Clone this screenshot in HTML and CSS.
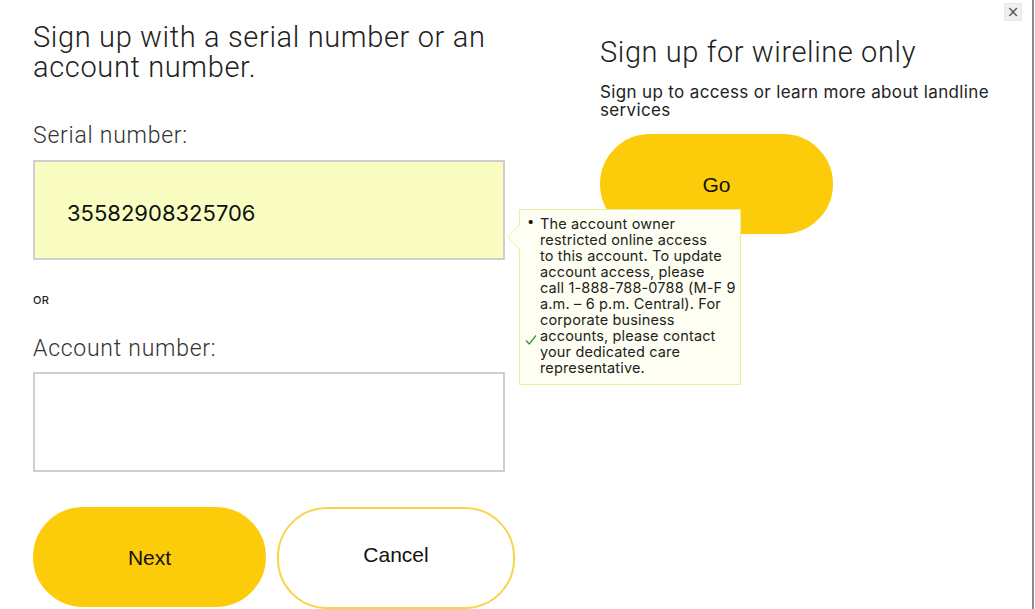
FILE: index.html
```html
<!DOCTYPE html>
<html>
<head>
<meta charset="utf-8">
<link rel="stylesheet" href="styles.css">
</head>
<body>
<div class="page">
  <div class="left">
    <h1 class="title">Sign up with a serial number or an account number.</h1>
    <label class="label label-serial">Serial number:</label>
    <div class="field-wrap">
      <div class="field field-filled">35582908325706</div>
      <div class="tooltip">
        <span class="tip-arrow"></span>
        <span class="bullet">•</span>
        <svg class="check" width="12" height="12" viewBox="0 0 12 12"><path d="M1 6.5 L4.2 10 L11 1.5" fill="none" stroke="#2e9a3a" stroke-width="1.3"/></svg>
        <p class="tip-text">The account owner<br>restricted online access<br>to this account. To update<br>account access, please<br>call 1-888-788-0788 (M-F 9<br>a.m. – 6 p.m. Central). For<br>corporate business<br>accounts, please contact<br>your dedicated care<br>representative.</p>
      </div>
    </div>
    <div class="or">OR</div>
    <label class="label label-account">Account number:</label>
    <div class="field"></div>
    <div class="buttons">
      <button class="btn btn-primary btn-next">Next</button>
      <button class="btn btn-outline">Cancel</button>
    </div>
  </div>
  <div class="right">
    <h2 class="title2">Sign up for wireline only</h2>
    <p class="sub">Sign up to access or learn more about landline services</p>
    <button class="btn btn-primary btn-go">Go</button>
  </div>
  <button class="close">×</button>
  <div class="edge"></div>
</div>
</body>
</html>
```

FILE: styles.css
```css
html, body {
  margin: 0;
  padding: 0;
  background: #fff;
}
.page {
  position: relative;
  width: 1035px;
  height: 609px;
  overflow: hidden;
  display: flex;
  font-family: Inter, "Liberation Sans", sans-serif;
  color: #222;
}
.left {
  width: 482px;
  padding-left: 33px;
  display: flex;
  flex-direction: column;
}
.title {
  margin: 22px 0 0;
  font-family: Roboto, sans-serif;
  font-weight: 300;
  font-size: 29px;
  line-height: 30px;
  letter-spacing: 0.65px;
  color: #222;
}
.label {
  display: block;
  font-family: Roboto, sans-serif;
  font-weight: 300;
  font-size: 23px;
  line-height: 26px;
  letter-spacing: 0.75px;
  color: #333;
}
.label-serial { margin-top: 41px; }
.label-account { margin-top: 29px; }
.field-wrap {
  position: relative;
  margin-top: 11px;
}
.field {
  box-sizing: border-box;
  width: 472px;
  height: 100px;
  border: 2px solid #cfcfcf;
  background: #fff;
  margin-top: 10px;
}
.field-filled {
  margin-top: 0;
  background: #f9fdc2;
  padding: 3px 0 0 32px;
  font-size: 22px;
  font-weight: 400;
  line-height: 96px;
  color: #111;
}
.or {
  margin-top: 33px;
  font-size: 11px;
  line-height: 14px;
  font-weight: 500;
  letter-spacing: 0.3px;
  color: #222;
}
.buttons {
  display: flex;
  gap: 11px;
  margin-top: 35px;
}
.btn {
  box-sizing: border-box;
  height: 100px;
  border-radius: 50px;
  border: 2px solid #fccc0a;
  font-family: "Liberation Sans", Arial, sans-serif;
  font-size: 21px;
  color: #111;
  cursor: pointer;
}
.btn-primary {
  background: #fccc0a;
  width: 233px;
}
.btn-next { padding-top: 2px; }
.btn-outline {
  background: #fff;
  width: 238px;
  height: 102px;
  padding-bottom: 8px;
  border-color: #f8d548;
}
.right {
  padding-left: 85px;
  display: flex;
  flex-direction: column;
  align-items: flex-start;
}
.title2 {
  margin: 37px 0 0;
  font-family: Roboto, sans-serif;
  font-weight: 300;
  font-size: 29px;
  line-height: 30px;
  letter-spacing: 0.6px;
  color: #222;
}
.sub {
  margin: 16px 0 0;
  font-size: 17px;
  line-height: 18px;
  letter-spacing: 0.35px;
  width: 400px;
  color: #222;
}
.btn-go {
  margin-top: 15px;
  padding-top: 2px;
}
.tooltip {
  position: absolute;
  left: 486px;
  top: 49px;
  box-sizing: border-box;
  width: 222px;
  height: 176px;
  background: #fefff2;
  border: 1px solid #e8ef9e;
  padding: 6px 0 0 20px;
  z-index: 2;
}
.tip-arrow {
  position: absolute;
  left: -13px;
  top: 14px;
  width: 0;
  height: 0;
  border-top: 13px solid transparent;
  border-bottom: 13px solid transparent;
  border-right: 13px solid #e8ef9e;
}
.tip-arrow::after {
  content: "";
  position: absolute;
  left: 1px;
  top: -12px;
  border-top: 12px solid transparent;
  border-bottom: 12px solid transparent;
  border-right: 12px solid #fefff2;
}
.bullet {
  position: absolute;
  left: 7px;
  top: 3px;
  font-size: 13px;
  color: #111;
}
.check {
  position: absolute;
  left: 5px;
  top: 124px;
}
.tip-text {
  margin: 0;
  font-size: 14.5px;
  line-height: 16px;
  letter-spacing: 0.15px;
  white-space: nowrap;
  color: #222;
}
.close {
  position: absolute;
  right: 13px;
  top: 3px;
  width: 18px;
  height: 18px;
  padding: 0;
  border: 1px solid #e6e6e6;
  background: #f0f0f0;
  color: #555;
  font-family: "DejaVu Sans", sans-serif;
  font-size: 15px;
  line-height: 14px;
}
.edge {
  position: absolute;
  right: 1px;
  top: 0;
  width: 2px;
  height: 609px;
  background: #8a8a8a;
}
```
